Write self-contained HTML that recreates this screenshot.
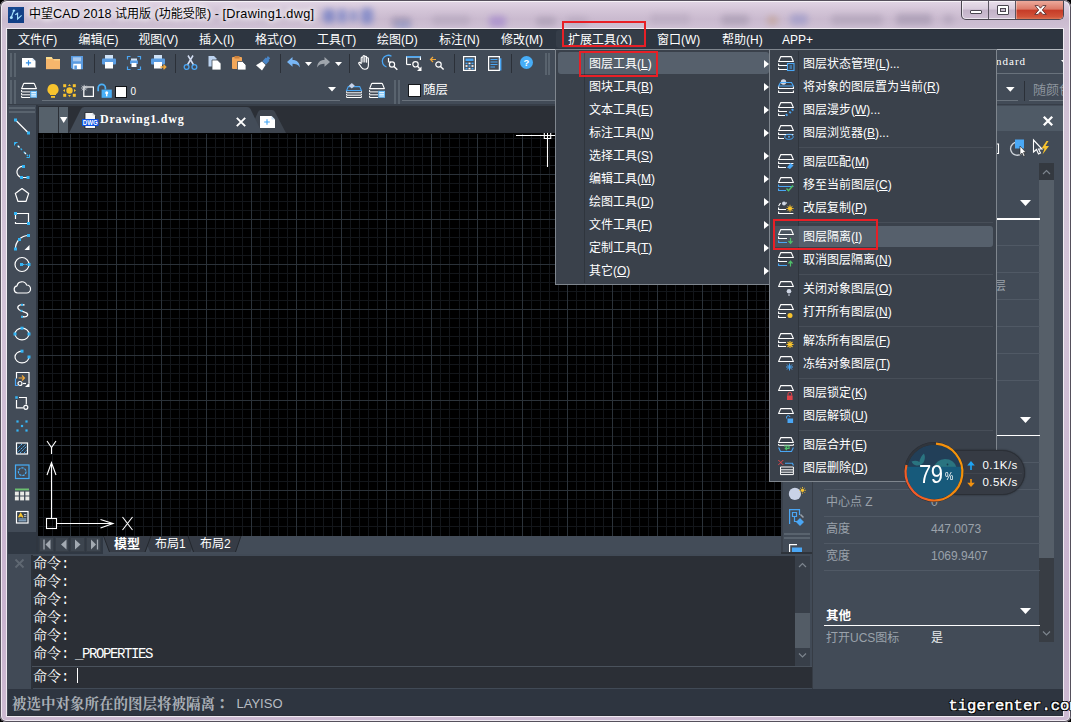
<!DOCTYPE html>
<html lang="zh-CN">
<head>
<meta charset="utf-8">
<title>中望CAD 2018 试用版 (功能受限) - [Drawing1.dwg]</title>
<style>
html,body{margin:0;padding:0;}
body{width:1071px;height:722px;overflow:hidden;position:relative;background:#000;
  font-family:"Liberation Sans","Noto Sans CJK SC",sans-serif;font-size:12px;color:#fff;line-height:1;}
div,span,svg{position:absolute;box-sizing:border-box;}
span{white-space:nowrap;}
svg{overflow:visible;}
#win{left:0;top:0;width:1071px;height:722px;border-radius:7px 7px 6px 6px;overflow:hidden;
  background:linear-gradient(180deg,#e2d7e6 0px,#d6c8da 8px,#cabacf 19px,#cdbed2 25px,#d0c2d5 29px,#cfc0d4 60px,#d3c4d8 300px,#cbb7d1 520px,#c9b4cf 620px,#cdbad2 722px);}
#winedge{left:0;top:0;width:1071px;height:722px;border-radius:7px 7px 6px 6px;
  box-shadow:inset 0 0 0 1px #55505c, inset 0 0 0 2px rgba(255,255,255,.7);}
.blob{filter:blur(3px);border-radius:4px;}
#title{left:29px;top:8px;font-size:12.7px;color:#000;letter-spacing:0;
  text-shadow:0 0 5px #fff,0 0 7px #fff,0 0 9px rgba(255,255,255,.9);}
#title i{font-style:normal;font-size:12px;}
#title b{font-weight:normal;letter-spacing:0.33px;}
.mb{top:34px;font-size:12px;color:#fff;}
.vsep{width:1px;background:#2b3038;}
.grip{width:2px;background:#59636e;}
.uline{height:1px;background:#69727c;}
.cl{left:33px;font-size:14px;color:#fff;font-family:"Liberation Mono","Noto Serif CJK SC",serif;}
.cl i{font-style:normal;font-size:14px;letter-spacing:-1.4px;}
.menu{background:#3a414b;border:1px solid #7f868e;}
.mi{font-size:12px;color:#fff;}
.mi u{text-decoration:underline;text-underline-offset:1px;}
.msep{height:1px;background:#474e58;}
.hl{background:#56606c;border-radius:3px;}
.redbox{border:2px solid #e81f26;}
.plabel{font-size:12px;color:#9aa2ab;}
.pline{height:1px;background:#505965;}
</style>
</head>
<body>
<div id="win">
<div class="blob" style="left:323px;top:9px;width:12px;height:14px;background:#6f7cc4;opacity:0.75;"></div>
<div class="blob" style="left:337px;top:9px;width:10px;height:14px;background:#7884c8;opacity:0.7;"></div>
<div class="blob" style="left:349px;top:10px;width:9px;height:12px;background:#7d88c8;opacity:0.65;"></div>
<div class="blob" style="left:361px;top:8px;width:12px;height:16px;background:#7480c6;opacity:0.75;"></div>
<div class="blob" style="left:391px;top:17px;width:20px;height:10px;background:#9c90ac;opacity:0.7;"></div>
<div class="blob" style="left:395px;top:22px;width:16px;height:6px;background:#8c9cd2;opacity:0.6;"></div>
<div class="blob" style="left:432px;top:16px;width:38px;height:9px;background:#b3a6bc;opacity:0.7;"></div>
<div class="blob" style="left:489px;top:16px;width:17px;height:11px;background:#a387cc;opacity:0.7;"></div>
<div class="blob" style="left:536px;top:17px;width:20px;height:9px;background:#a89bb2;opacity:0.7;"></div>
<div class="blob" style="left:566px;top:17px;width:22px;height:9px;background:#b1a4ba;opacity:0.6;"></div>
<div class="blob" style="left:650px;top:14px;width:40px;height:10px;background:#b4a6bc;opacity:0.55;"></div>
<div class="blob" style="left:721px;top:15px;width:28px;height:10px;background:#a79ab1;opacity:0.7;"></div>
<div class="blob" style="left:767px;top:16px;width:11px;height:9px;background:#c29f8c;opacity:0.6;"></div>
<div class="blob" style="left:790px;top:14px;width:18px;height:11px;background:#9896c8;opacity:0.65;"></div>
<div class="blob" style="left:831px;top:15px;width:52px;height:10px;background:#ada0b6;opacity:0.65;"></div>
<div class="blob" style="left:896px;top:14px;width:36px;height:11px;background:#a598b0;opacity:0.7;"></div>
<div class="blob" style="left:943px;top:15px;width:11px;height:9px;background:#aa9db4;opacity:0.6;"></div>
</div>
<div id="winedge"></div>
<svg style="left:8px;top:7px;" width="16" height="16" viewBox="0 0 16 16"><rect x="0" y="0" width="16" height="16" fill="#123f86"/><path d="M0 0 H16 L0 9 Z" fill="#1b4c96" opacity="0.6"/><path d="M3.3 10.3 L5.8 3.5" stroke="#a8e4ff" stroke-width="1.1"/><circle cx="3.3" cy="10.4" r="1.5" fill="#a8e4ff"/><circle cx="5.9" cy="3.6" r="1.2" fill="#a8e4ff"/><path d="M7.3 7.8 L9.6 6.3 L9.6 12 L13.6 8.4" fill="none" stroke="#a8e4ff" stroke-width="1.1"/></svg>
<span id="title"><i>中望</i>CAD 2018 <i>试用版</i> (<i>功能受限</i>) - <b>[Drawing1.dwg]</b></span>
<div style="left:960.8px;top:1px;width:103.2px;height:18.6px;border:1px solid #4a4650;border-top:none;border-radius:0 0 5px 5px;background:linear-gradient(180deg,#eae0ec 0%,#d8cbdc 45%,#c3b2c8 50%,#cfc0d4 100%);box-shadow:inset 0 0 0 1px rgba(255,255,255,.6);overflow:hidden;"><div style="left:26px;top:0px;width:1px;height:20px;background:#5a5560;"></div>
<div style="left:53px;top:0px;width:1px;height:20px;background:#5a5560;"></div>
<div style="left:54px;top:-1px;width:49px;height:20px;background:linear-gradient(180deg,#efb0a2 0%,#dc7a68 45%,#c63c28 52%,#d2543a 85%,#e08a68 100%);box-shadow:inset 0 0 0 1px rgba(255,255,255,.35);"></div>
</div>
<div style="left:970px;top:10px;width:12px;height:4px;background:#fff;border:1px solid #4a4650;border-radius:1px;"></div>
<div style="left:997px;top:5px;width:12px;height:10px;background:#fff;border:1px solid #4a4650;border-radius:1px;"><div style="left:2px;top:2px;width:6px;height:4px;background:#cbbdd0;border:1px solid #4a4650;"></div>
</div>
<svg style="left:1034px;top:5px;" width="13" height="10" viewBox="0 0 13 10"><path d="M1 0.6 L4.3 0.6 L6.5 3.2 L8.7 0.6 L12 0.6 L8.3 5 L12.2 9.4 L8.8 9.4 L6.5 6.8 L4.2 9.4 L0.8 9.4 L4.7 5 Z" fill="#fff" stroke="#5a3030" stroke-width="0.9"/></svg>
<div style="left:6.3px;top:27.5px;width:1057.7px;height:689px;border:1px solid rgba(255,255,255,.7);"></div>
<div style="left:7.3px;top:28.5px;width:1055.7px;height:687px;background:#2a2f38;"></div>
<div style="left:7.3px;top:30px;width:1055.7px;height:685px;background:#424b57;"></div>
<div style="left:7.5px;top:30px;width:1055.5px;height:19px;background:#2d3540;"></div>
<div style="left:555.5px;top:30px;width:89px;height:18px;background:#353d48;border-radius:3px;"></div>
<span class="mb" style="left:18px;top:34px;">文件(F)</span>
<span class="mb" style="left:78.5px;top:34px;">编辑(E)</span>
<span class="mb" style="left:138.3px;top:34px;">视图(V)</span>
<span class="mb" style="left:199px;top:34px;">插入(I)</span>
<span class="mb" style="left:255px;top:34px;">格式(O)</span>
<span class="mb" style="left:317px;top:34px;">工具(T)</span>
<span class="mb" style="left:377px;top:34px;">绘图(D)</span>
<span class="mb" style="left:439px;top:34px;">标注(N)</span>
<span class="mb" style="left:501px;top:34px;">修改(M)</span>
<span class="mb" style="left:568px;top:34px;">扩展工具(X)</span>
<span class="mb" style="left:657px;top:34px;">窗口(W)</span>
<span class="mb" style="left:722px;top:34px;">帮助(H)</span>
<span class="mb" style="left:782px;top:34px;">APP+</span>
<div style="left:7.5px;top:49px;width:1055.5px;height:1px;background:#b4b9bf;"></div>
<div class="grip" style="left:10px;top:52.5px;width:2px;height:24px;"></div>
<div class="grip" style="left:10px;top:79.5px;width:2px;height:24px;"></div>
<div class="grip" style="left:13.8px;top:52.5px;width:2px;height:24px;"></div>
<div class="grip" style="left:13.8px;top:79.5px;width:2px;height:24px;"></div>
<svg style="left:21.8px;top:57.7px;" width="13.5" height="9.5" viewBox="0 0 13.5 9.5"><path d="M0 0 H10.5 L13.5 3 V9.5 H0 Z" fill="#fff"/><path d="M10.5 0 V3 H13.5" fill="#cfe3f7"/><path d="M6.5 2.2 V7.4 M3.9 4.8 H9.1" stroke="#2f8de4" stroke-width="1.2"/></svg>
<svg style="left:46px;top:56.8px;" width="14" height="12.2" viewBox="0 0 14 12.2"><path d="M0 0 H5.8 L7 2 H0 Z" fill="#f9dc8e"/><path d="M0 2 H14 V12.2 H0 Z" fill="#f6b66c"/><path d="M0 2 H7.2 L8.2 3.4 H14 V2 Z" fill="#f9cf86"/></svg>
<svg style="left:71.1px;top:55.9px;" width="12" height="13.2" viewBox="0 0 12 13.2"><path d="M0 0 H12 V13.2 H1.5 L0 11.7 Z" fill="#5a9be0"/><rect x="2" y="1.3" width="8" height="4" fill="#a9c9ee"/><rect x="2.3" y="7.8" width="7.6" height="5.4" fill="#fff"/><rect x="3.3" y="9.5" width="2.6" height="3.7" fill="#5a9be0"/></svg>
<div class="vsep" style="left:94px;top:54px;width:1px;height:19px;"></div>
<svg style="left:102px;top:55px;" width="15" height="15" viewBox="0 0 15 15"><rect x="3" y="0" width="8" height="4" fill="#cfe2f6"/><rect x="0" y="3.5" width="14" height="6" rx="1" fill="#5b9de2"/><rect x="3" y="7" width="8" height="6.5" fill="#fff"/></svg>
<svg style="left:127px;top:56px;" width="14" height="14" viewBox="0 0 14 14"><path d="M0.5 3.5 V0.5 H3.5 M10.5 0.5 H13.5 V3.5 M13.5 10.5 V13.5 H10.5 M3.5 13.5 H0.5 V10.5" stroke="#4aa6f4" stroke-width="1.2" fill="none"/><rect x="4" y="2.5" width="6" height="2.5" fill="#cfe2f6"/><rect x="3" y="4.5" width="8" height="3.5" fill="#5b9de2"/><rect x="4.5" y="7" width="5" height="4" fill="#fff"/></svg>
<svg style="left:151px;top:55px;" width="15" height="15" viewBox="0 0 15 15"><rect x="3" y="0" width="8" height="4" fill="#cfe2f6"/><rect x="0" y="3.5" width="14" height="6" rx="1" fill="#5b9de2"/><rect x="3" y="7" width="8" height="6.5" fill="#fff"/><path d="M9.5 12 H14.5 M12.5 9.8 L14.8 12 L12.5 14.2" stroke="#f2a93b" stroke-width="1.3" fill="none"/></svg>
<div class="vsep" style="left:175px;top:54px;width:1px;height:19px;"></div>
<svg style="left:183px;top:55px;" width="15" height="15" viewBox="0 0 15 15"><path d="M5 0.5 L10.6 10 M10 0.5 L4.4 10" stroke="#d3def3" stroke-width="1.5" fill="none"/><circle cx="3.6" cy="12" r="2.4" stroke="#4aa6f4" stroke-width="1.3" fill="none"/><circle cx="11.4" cy="12" r="2.4" stroke="#4aa6f4" stroke-width="1.3" fill="none"/></svg>
<svg style="left:208px;top:56px;" width="13" height="14" viewBox="0 0 13 14"><path d="M0.5 0 H6 L8.5 2.5 V10.5 H0.5 Z" fill="#bcd3f0"/><path d="M4 4 H9.5 L13 7.5 V14 H4 Z" fill="#fff" stroke="#424b57" stroke-width="0.8"/></svg>
<svg style="left:232px;top:56px;" width="14" height="14" viewBox="0 0 14 14"><rect x="0" y="1" width="10" height="12" rx="1" fill="#f2a75a"/><rect x="2.5" y="0" width="5" height="2.5" fill="#c9803c"/><path d="M5.5 5.5 H10.5 L14 9 V14 H5.5 Z" fill="#fff" stroke="#424b57" stroke-width="0.8"/></svg>
<svg style="left:256px;top:56px;" width="15" height="15" viewBox="0 0 15 15"><path d="M11.8 0 L14.2 2.2 L12.6 4 L13.4 4.8 L10 8.6 L6.4 5.2 L9.8 1.6 L10.6 2.2 Z" fill="#4a86c8"/><path d="M6 5.6 L9.6 9 L6 14.5 L0 9.2 Z" fill="#fff"/></svg>
<div class="vsep" style="left:280px;top:54px;width:1px;height:19px;"></div>
<svg style="left:287px;top:57px;" width="13" height="11" viewBox="0 0 13 11"><path d="M5.5 0 V3 C10 3 12.8 5.5 12.8 10.5 C11 7.5 9 6.8 5.5 6.8 V9.8 L0 4.9 Z" fill="#78b6f5"/></svg>
<svg style="left:305px;top:62px;" width="7" height="4" viewBox="0 0 7 4"><path d="M0 0 H7 L3.5 4 Z" fill="#fff"/></svg>
<svg style="left:317px;top:57px;" width="13" height="11" viewBox="0 0 13 11"><path d="M7.5 0 V3 C3 3 0.2 5.5 0.2 10.5 C2 7.5 4 6.8 7.5 6.8 V9.8 L13 4.9 Z" fill="#9fa5ac"/></svg>
<svg style="left:335px;top:62px;" width="7" height="4" viewBox="0 0 7 4"><path d="M0 0 H7 L3.5 4 Z" fill="#fff"/></svg>
<div class="vsep" style="left:349px;top:54px;width:1px;height:19px;"></div>
<svg style="left:358px;top:55px;" width="13" height="15" viewBox="0 0 13 15"><path d="M3.2 8.5 V3 Q3.2 2 4.1 2 Q5 2 5 3 V7 V1.6 Q5 0.6 5.9 0.6 Q6.8 0.6 6.8 1.6 V7 V2.2 Q6.8 1.3 7.7 1.3 Q8.6 1.3 8.6 2.2 V7.3 V3.6 Q8.6 2.8 9.5 2.8 Q10.4 2.8 10.4 3.6 V10 Q10.4 14.3 6.8 14.3 Q4.5 14.3 3.3 12.3 L0.8 8.6 Q0.4 7.7 1.2 7.4 Q2 7.2 2.6 8 Z" fill="none" stroke="#fff" stroke-width="1.1" stroke-linejoin="round"/></svg>
<svg style="left:382px;top:55px;" width="16" height="15" viewBox="0 0 16 15"><path d="M9.5 1.2 A6 6 0 1 0 4.5 12" stroke="#4aa6f4" stroke-width="1.3" fill="none"/><path d="M6.5 3 V7 H9" stroke="#fff" stroke-width="1.2" fill="none"/><circle cx="10" cy="9.5" r="2.6" stroke="#fff" stroke-width="1.2" fill="none"/><path d="M12 11.5 L15.3 14.8" stroke="#fff" stroke-width="1.4"/></svg>
<svg style="left:405.5px;top:56px;" width="16" height="15" viewBox="0 0 16 15"><path d="M0.6 8.5 V0.8 H14.4 V4" stroke="#fff" stroke-width="1.2" fill="none"/><path d="M0.6 0.8 H14.4" stroke="#4aa6f4" stroke-width="1.6"/><path d="M0.6 8.5 H5" stroke="#fff" stroke-width="1.2"/><circle cx="9.5" cy="8.3" r="2.7" stroke="#fff" stroke-width="1.2" fill="none"/><path d="M11.5 10.3 L13.6 12.4" stroke="#fff" stroke-width="1.4"/><path d="M15.5 10.5 V15 H11 Z" fill="#fff"/></svg>
<svg style="left:429.5px;top:56px;" width="14" height="14" viewBox="0 0 14 14"><path d="M0.5 3.5 H6 M3 1 L0.5 3.5 L3 6" stroke="#f2a93b" stroke-width="1.2" fill="none"/><circle cx="8.5" cy="8.5" r="2.7" stroke="#fff" stroke-width="1.2" fill="none"/><path d="M10.5 10.5 L13.6 13.6" stroke="#fff" stroke-width="1.4"/></svg>
<div class="vsep" style="left:454px;top:54px;width:1px;height:19px;"></div>
<svg style="left:463px;top:55.7px;" width="13" height="15" viewBox="0 0 13 15"><rect x="0.6" y="0.6" width="11.8" height="13.8" fill="none" stroke="#fff" stroke-width="1.2"/><rect x="2.5" y="2.5" width="8" height="2.5" fill="#4aa6f4"/><rect x="2.5" y="6.6" width="2" height="1.6" fill="#4aa6f4"/><rect x="5.5" y="6.6" width="2" height="1.6" fill="#fff"/><rect x="8.5" y="6.6" width="2" height="1.6" fill="#4aa6f4"/><rect x="2.5" y="9.2" width="2" height="1.6" fill="#fff"/><rect x="5.5" y="9.2" width="2" height="1.6" fill="#4aa6f4"/><rect x="8.5" y="9.2" width="2" height="1.6" fill="#fff"/><rect x="2.5" y="11.8" width="2" height="1.6" fill="#4aa6f4"/><rect x="5.5" y="11.8" width="2" height="1.6" fill="#fff"/><rect x="8.5" y="11.8" width="2" height="1.6" fill="#4aa6f4"/></svg>
<svg style="left:488px;top:55.7px;" width="13" height="15" viewBox="0 0 13 15"><path d="M0.6 0.6 H11.4 V14.4 H0.6 Z" fill="none" stroke="#fff" stroke-width="1.2"/><path d="M11.5 3 H12.6 V14.4" stroke="#4aa6f4" stroke-width="1.6" fill="none"/><path d="M2.5 3.5 H9.5 M2.5 6 H9.5 M2.5 8.5 H9.5 M2.5 11 H7" stroke="#4aa6f4" stroke-width="1.1"/></svg>
<div class="vsep" style="left:511px;top:54px;width:1px;height:19px;"></div>
<svg style="left:520px;top:56px;" width="13" height="13" viewBox="0 0 13 13"><circle cx="6.5" cy="6.5" r="6.5" fill="#47adf7"/><text x="6.5" y="10" font-size="9.5" font-weight="bold" text-anchor="middle" fill="#fff" font-family="Liberation Sans, sans-serif">?</text></svg>
<div class="grip" style="left:545px;top:53px;width:2px;height:22px;"></div>
<div class="grip" style="left:548px;top:53px;width:2px;height:22px;"></div>
<svg style="left:21.2px;top:83px;" width="16" height="15" viewBox="0 0 16 15"><path d="M0.6 5.6 L2.6 0.8 Q2.8 0.4 3.4 0.4 H12.6 Q13.2 0.4 13.4 0.8 L15.4 5.6 Z" fill="none" stroke="#fff" stroke-width="1.1" stroke-linejoin="round"/><path d="M0.6 7 V8.9 H9 M0.6 10 V11.8 H9 M0.6 12.8 V14.5 H9" stroke="#fff" stroke-width="1" fill="none"/><rect x="9.2" y="7.8" width="6.8" height="7" fill="#6bbcf8"/><path d="M10.3 9.6 H15 M10.3 11.3 H15 M10.3 13 H15" stroke="#fff" stroke-width="0.9"/></svg>
<svg style="left:46.5px;top:84.2px;" width="12" height="14" viewBox="0 0 12 14"><path d="M6 0 A5.6 5.6 0 0 1 9 10.3 V11 H3 V10.3 A5.6 5.6 0 0 1 6 0 Z" fill="#f7c32e"/><rect x="4" y="12" width="4" height="1.8" fill="#f7c32e"/></svg>
<svg style="left:63.1px;top:84px;" width="13" height="13" viewBox="0 0 13 13"><circle cx="6.5" cy="6.5" r="3.2" fill="#f7c32e"/><rect x="0.2" y="0.2" width="3" height="3" fill="#f7c32e"/><rect x="9.8" y="0.2" width="3" height="3" fill="#f7c32e"/><rect x="0.2" y="9.8" width="3" height="3" fill="#f7c32e"/><rect x="9.8" y="9.8" width="3" height="3" fill="#f7c32e"/><path d="M6.5 0 L8 2 H5 Z M6.5 13 L8 11 H5 Z M0 6.5 L2 5 V8 Z M13 6.5 L11 5 V8 Z" fill="#f7c32e"/></svg>
<svg style="left:80.5px;top:83.5px;" width="13" height="13" viewBox="0 0 13 13"><rect x="2.8" y="3" width="9.6" height="9.4" fill="none" stroke="#fff" stroke-width="1.2"/><path d="M0 4 H6.4 M3.2 0.8 V7.2 M0.9 1.7 L5.5 6.3 M5.5 1.7 L0.9 6.3" stroke="#c8cdd3" stroke-width="0.9"/></svg>
<svg style="left:96.5px;top:83px;" width="15" height="15" viewBox="0 0 15 15"><path d="M1.2 8.3 V5 A3.6 3.6 0 0 1 8.4 5 V6.5" stroke="#4ab0f8" stroke-width="1.7" fill="none"/><rect x="4.6" y="6.6" width="10.2" height="8.2" fill="#4ab0f8"/><circle cx="9.7" cy="9.8" r="1.5" fill="#fff"/><rect x="9" y="10.3" width="1.4" height="3" fill="#fff"/></svg>
<div style="left:115px;top:86px;width:12px;height:11.8px;background:#fff;border:1px solid #111418;"></div>
<span style="left:130.5px;top:86.5px;font-size:10px;color:#fff;">0</span>
<div class="uline" style="left:42px;top:100px;width:298px;height:1px;"></div>
<svg style="left:328px;top:87px;" width="8" height="4.5" viewBox="0 0 8 4.5"><path d="M0 0 H8 L4 4.5 Z" fill="#fff"/></svg>
<svg style="left:345.5px;top:83px;" width="16" height="15" viewBox="0 0 16 15"><path d="M0.6 7.5 L2.3 3.6 H13.7 L15.4 7.5 Z" fill="none" stroke="#4aa6f4" stroke-width="1.1"/><path d="M5.8 0 L8.8 2.8 L5.8 5.6 L2.8 2.8 Z" fill="#c7d3ea"/><path d="M0.6 8.3 V9.8 H15.4 V8.3 M0.6 10.8 V12.2 H15.4 V10.8 M0.6 13.1 V14.5 H15.4 V13.1" stroke="#fff" stroke-width="1" fill="none"/></svg>
<svg style="left:369px;top:83px;" width="16" height="15" viewBox="0 0 16 15"><path d="M0.6 5.6 L2.6 0.8 Q2.8 0.4 3.4 0.4 H12.6 Q13.2 0.4 13.4 0.8 L15.4 5.6 Z" fill="none" stroke="#fff" stroke-width="1.1" stroke-linejoin="round"/><path d="M0.6 7 V8.9 H9 M0.6 10 V11.8 H9 M0.6 12.8 V14.5 H9" stroke="#fff" stroke-width="1" fill="none"/><rect x="9.2" y="7.8" width="6.8" height="7" fill="#6bbcf8"/><path d="M10.3 9.6 H15 M10.3 11.3 H15 M10.3 13 H15" stroke="#fff" stroke-width="0.9"/></svg>
<div class="grip" style="left:394.3px;top:79.5px;width:1.8px;height:24px;"></div>
<div class="grip" style="left:398px;top:79.5px;width:1.8px;height:24px;"></div>
<div style="left:408px;top:84px;width:12.5px;height:12.5px;background:#fff;border:1px solid #14171b;"></div>
<span style="left:423px;top:84px;font-size:12.5px;color:#fff;">随层</span>
<div class="uline" style="left:402px;top:100px;width:616px;height:1px;"></div>
<div style="left:990px;top:50px;width:73px;height:55px;overflow:hidden;"><span style="left:6px;top:6px;font-size:11px;color:#fff;font-family:'Liberation Serif',serif;letter-spacing:1px;">ndard</span>
<svg style="left:70.5px;top:10px;" width="7" height="4" viewBox="0 0 7 4"><path d="M0 0 H7 L3.5 4 Z" fill="#fff"/></svg>
<div class="uline" style="left:6px;top:23px;width:67px;height:1px;"></div>
<svg style="left:15.7px;top:36.6px;" width="8.6" height="4.8" viewBox="0 0 8.6 4.8"><path d="M0 0 H8.6 L4.3 4.8 Z" fill="#fff"/></svg>
<div class="vsep" style="left:34px;top:31px;width:1px;height:20px;"></div>
<span style="left:43px;top:32.5px;font-size:13px;color:#8d959e;">随颜色</span>
<div class="uline" style="left:39px;top:50px;width:40px;height:1px;"></div>
</div>
<div style="left:7.5px;top:104px;width:1055.5px;height:2px;background:#373e48;"></div>
<div style="left:38px;top:105.5px;width:743px;height:27.5px;background:#2b2f36;"></div>
<div style="left:39px;top:107px;width:18.5px;height:26px;background:#56616b;"></div>
<div style="left:58.5px;top:107px;width:9.5px;height:26px;background:#56616b;"></div>
<svg style="left:59.8px;top:117px;" width="7.4" height="6" viewBox="0 0 7.4 6"><path d="M0 0 H7.4 L3.7 6 Z" fill="#fff"/></svg>
<svg style="left:0px;top:0px;" width="300" height="140" viewBox="0 0 300 140"><path d="M249 133 L258 112 Q259 110 261 110 H272 Q274 110 275 112 L286 133 Z" fill="#3d444e"/><path d="M69 133 L81 109 Q82 107 84.5 107 H247 Q249.5 107 250.5 109 L262 133 Z" fill="#434c58"/></svg>
<svg style="left:82px;top:112px;" width="17" height="17" viewBox="0 0 17 17"><path d="M3 0.5 H10.5 L13.5 3.5 V16.5 H3 Z" fill="#f4f6f8" stroke="#1c2026" stroke-width="0.8"/><path d="M10.5 0.5 V3.5 H13.5" fill="#c9d0d8"/><rect x="0" y="7" width="16.5" height="7" fill="#0b52e6"/><text x="8.3" y="13" font-size="7" font-weight="bold" text-anchor="middle" fill="#fff" font-family="Liberation Sans, sans-serif" textLength="15" lengthAdjust="spacingAndGlyphs">DWG</text></svg>
<span style="left:100px;top:113px;font-family:'Liberation Serif','Noto Serif CJK SC',serif;font-weight:bold;font-size:12px;letter-spacing:0.8px;color:#fff;">Drawing1.dwg</span>
<svg style="left:236px;top:117px;" width="10" height="10" viewBox="0 0 10 10"><path d="M0.8 0.8 L9.2 9.2 M9.2 0.8 L0.8 9.2" stroke="#fff" stroke-width="1.9"/></svg>
<svg style="left:260px;top:116px;" width="15" height="12" viewBox="0 0 15 12"><path d="M0 0 H11.5 L15 3.5 V12 H0 Z" fill="#fff"/><path d="M11.5 0 V3.5 H15" fill="#cfe3f7"/><path d="M7 3.2 V8.8 M4.2 6 H9.8" stroke="#3fa4f4" stroke-width="1.1"/></svg>
<div style="left:7.5px;top:105px;width:28.5px;height:427px;background:#424b57;"></div>
<div style="left:7.5px;top:532px;width:30.5px;height:22px;background:#303843;"></div>
<div style="left:36px;top:105px;width:2px;height:449px;background:#2f3640;"></div>
<div style="left:9px;top:107px;width:26px;height:2px;background:#59636e;"></div>
<div style="left:9px;top:111px;width:26px;height:2px;background:#59636e;"></div>
<svg style="left:10px;top:114.5px;" width="24" height="23" viewBox="0 0 24 23"><path d="M5.5 5 L18.5 18" stroke="#fff" stroke-width="1.2" fill="none"/><rect x="4" y="3.5" width="3" height="3" fill="#35b5f5"/><rect x="17" y="16.5" width="3" height="3" fill="#35b5f5"/></svg>
<svg style="left:10px;top:137.5px;" width="24" height="23" viewBox="0 0 24 23"><path d="M4.5 4.5 L19.5 19.5" stroke="#35b5f5" stroke-width="1.3" stroke-dasharray="2 2.3" fill="none"/><path d="M4.5 7.5 V4.5 H7.5 M16.5 19.5 H19.5 V16.5" stroke="#35b5f5" stroke-width="1" fill="none"/><path d="M8 8 L9.5 9.5 M14.5 14.5 L16 16" stroke="#fff" stroke-width="1.2"/></svg>
<svg style="left:10px;top:160.5px;" width="24" height="23" viewBox="0 0 24 23"><path d="M13.5 5.5 A5.5 5.5 0 1 0 11.5 16.5 H18" stroke="#fff" stroke-width="1.2" fill="none"/><rect x="12" y="4" width="3" height="3" fill="#35b5f5"/><rect x="10" y="15" width="3" height="3" fill="#35b5f5"/><rect x="16.5" y="15" width="3" height="3" fill="#35b5f5"/></svg>
<svg style="left:10px;top:183.5px;" width="24" height="23" viewBox="0 0 24 23"><path d="M12 4.5 L18.7 9.4 L16.1 17.3 H7.9 L5.3 9.4 Z" stroke="#fff" stroke-width="1.2" fill="none" stroke-linejoin="round"/></svg>
<svg style="left:10px;top:206.5px;" width="24" height="23" viewBox="0 0 24 23"><path d="M5.5 6.5 H18.5 V16.5 H5.5 Z" stroke="#fff" stroke-width="1.2" fill="none"/><rect x="3.5" y="12" width="4" height="3" fill="#424b57"/><rect x="4" y="5" width="3" height="3" fill="#35b5f5"/><rect x="17" y="15" width="3" height="3" fill="#35b5f5"/></svg>
<svg style="left:10px;top:229.5px;" width="24" height="23" viewBox="0 0 24 23"><path d="M5.5 19 A13 13 0 0 1 18.5 5.5" stroke="#fff" stroke-width="1.2" fill="none"/><rect x="4" y="17.5" width="3" height="3" fill="#35b5f5"/><rect x="8" y="8" width="3" height="3" fill="#35b5f5"/><rect x="17" y="4" width="3" height="3" fill="#35b5f5"/><path d="M19.5 15 V20 H14.5 Z" fill="#fff"/></svg>
<svg style="left:10px;top:252.5px;" width="24" height="23" viewBox="0 0 24 23"><circle cx="12" cy="11.5" r="7" stroke="#fff" stroke-width="1.2" fill="none"/><rect x="10" y="10" width="3" height="3" fill="#35b5f5"/><rect x="17.5" y="10" width="3" height="3" fill="#35b5f5"/><path d="M13 11.5 H17.5" stroke="#35b5f5" stroke-width="1" stroke-dasharray="1.5 1"/></svg>
<svg style="left:10px;top:275.5px;" width="24" height="23" viewBox="0 0 24 23"><path d="M7.5 17 A3.6 3.6 0 0 1 7 9.9 A5 5 0 0 1 16.6 9 A4 4 0 0 1 16.5 17 Z" stroke="#fff" stroke-width="1.2" fill="none" stroke-linejoin="round"/></svg>
<svg style="left:10px;top:298.5px;" width="24" height="23" viewBox="0 0 24 23"><path d="M14.5 6 C9 4.5 5.5 8.5 9.5 11 C13 13 19 13.5 17.5 16.5 C16.5 18.5 13.5 18 11.5 17.5" stroke="#fff"  fill="none" stroke-width="1.3"/><rect x="11" y="4.8" width="2" height="2" fill="#35b5f5"/><rect x="10.5" y="10.8" width="2" height="2" fill="#35b5f5"/><rect x="11" y="16.8" width="2" height="2" fill="#35b5f5"/></svg>
<svg style="left:10px;top:321.5px;" width="24" height="23" viewBox="0 0 24 23"><ellipse cx="12" cy="12" rx="7" ry="5.8" stroke="#fff" stroke-width="1.2" fill="none"/><rect x="10.5" y="4.7" width="3" height="3" fill="#35b5f5"/><rect x="3.5" y="10.5" width="3" height="3" fill="#35b5f5"/><rect x="17.5" y="10.5" width="3" height="3" fill="#35b5f5"/></svg>
<svg style="left:10px;top:344.5px;" width="24" height="23" viewBox="0 0 24 23"><path d="M12 6.2 A7 5.8 0 1 0 19 12" stroke="#fff" stroke-width="1.2" fill="none"/><rect x="10.5" y="4.7" width="3" height="3" fill="#35b5f5"/><rect x="17.5" y="10.5" width="3" height="3" fill="#35b5f5"/></svg>
<svg style="left:10px;top:367.5px;" width="24" height="23" viewBox="0 0 24 23"><path d="M6.5 10.5 V4.5 H19 V15" stroke="#fff" stroke-width="1.2" fill="none"/><path d="M5.5 10.5 V17.5 H8" stroke="#4aa6f4" stroke-width="1.2" fill="none"/><path d="M8.5 10 H14.5 M12 7.5 L14.5 10 L12 12.5" stroke="#f2a93b" stroke-width="1.1" fill="none"/><circle cx="10" cy="15.5" r="2" stroke="#fff" stroke-width="1.2" fill="none"/><path d="M13 15.5 H16" stroke="#fff" stroke-width="1.2"/><path d="M19.5 14.5 V19 H15 Z" fill="#fff"/></svg>
<svg style="left:10px;top:390.5px;" width="24" height="23" viewBox="0 0 24 23"><path d="M9 6.5 H16.3 V13.5 M6.5 9 V16.8 H13.3" stroke="#fff" stroke-width="1.2" fill="none"/><rect x="5.25" y="5.25" width="2.5" height="2.5" fill="#35b5f5"/><circle cx="15.8" cy="16.3" r="2" stroke="#fff" stroke-width="1.2" fill="none"/></svg>
<svg style="left:10px;top:413.5px;" width="24" height="23" viewBox="0 0 24 23"><rect x="6.4" y="6.4" width="2.2" height="2.2" fill="#35b5f5"/><rect x="15.4" y="6.4" width="2.2" height="2.2" fill="#35b5f5"/><rect x="10.9" y="10.9" width="2.2" height="2.2" fill="#35b5f5"/><rect x="6.4" y="15.4" width="2.2" height="2.2" fill="#35b5f5"/><rect x="15.4" y="15.4" width="2.2" height="2.2" fill="#35b5f5"/></svg>
<svg style="left:10px;top:436.5px;" width="24" height="23" viewBox="0 0 24 23"><rect x="6.5" y="6" width="11" height="11" fill="#2b3a4a" stroke="#fff" stroke-width="1.2"/><path d="M7.5 11.5 L12 7 M7.5 15.5 L16 7 M10 16 L16.5 9.5 M14 16 L16.5 13.5" stroke="#5ab4f5" stroke-width="1" stroke-dasharray="1.6 0.8"/></svg>
<svg style="left:10px;top:459.5px;" width="24" height="23" viewBox="0 0 24 23"><rect x="5.5" y="5" width="13.5" height="13.5" fill="none" stroke="#47adf7" stroke-width="1.2"/><circle cx="12.2" cy="11.7" r="3.8" fill="none" stroke="#47adf7" stroke-width="1.2" stroke-dasharray="2.4 0.9"/></svg>
<svg style="left:10px;top:482.5px;" width="24" height="23" viewBox="0 0 24 23"><rect x="5" y="5.5" width="14" height="1.9" fill="#6cc070"/><rect x="4.9" y="8.6" width="3.9" height="3.9" fill="#e9e9e6"/><rect x="10.15" y="8.6" width="3.9" height="3.9" fill="#e9e9e6"/><rect x="15.4" y="8.6" width="3.9" height="3.9" fill="#e9e9e6"/><rect x="4.9" y="13.5" width="3.9" height="3.9" fill="#e9e9e6"/><rect x="10.15" y="13.5" width="3.9" height="3.9" fill="#e9e9e6"/><rect x="15.4" y="13.5" width="3.9" height="3.9" fill="#e9e9e6"/></svg>
<svg style="left:10px;top:505.5px;" width="24" height="23" viewBox="0 0 24 23"><rect x="6.5" y="5.5" width="11.5" height="11.5" fill="#38424e" stroke="#fff" stroke-width="1.2"/><path d="M8.6 11.3 L10.7 7.6 L12.8 11.3 M9.4 10 H12" stroke="#f7c32e" stroke-width="1.4" fill="none"/><path d="M14 8.5 H16.3 M14 10.3 H16.3" stroke="#e4e8ec" stroke-width="0.8"/><path d="M8.5 13 H16.3 M8.5 14.8 H16.3" stroke="#a8d4f8" stroke-width="0.9"/></svg>
<svg style="left:38px;top:133px;overflow:hidden;" width="743" height="403" viewBox="0 0 743 403"><rect width="743" height="403" fill="#000"/><g shape-rendering="crispEdges" fill="none" stroke-width="1" transform="translate(0.5,0.5)"><path d="M5 0V403M14 0V403M23 0V403M41 0V403M50 0V403M59 0V403M69 0V403M87 0V403M96 0V403M105 0V403M114 0V403M132 0V403M141 0V403M150 0V403M159 0V403M177 0V403M186 0V403M195 0V403M204 0V403M222 0V403M231 0V403M240 0V403M249 0V403M267 0V403M276 0V403M285 0V403M294 0V403M312 0V403M321 0V403M330 0V403M339 0V403M357 0V403M366 0V403M375 0V403M384 0V403M402 0V403M411 0V403M421 0V403M430 0V403M448 0V403M457 0V403M466 0V403M475 0V403M493 0V403M502 0V403M511 0V403M520 0V403M538 0V403M547 0V403M556 0V403M565 0V403M583 0V403M592 0V403M601 0V403M610 0V403M628 0V403M637 0V403M646 0V403M655 0V403M673 0V403M682 0V403M691 0V403M700 0V403M718 0V403M727 0V403M736 0V403M0 5H743M0 14H743M0 23H743M0 32H743M0 50H743M0 59H743M0 68H743M0 77H743M0 95H743M0 104H743M0 113H743M0 122H743M0 140H743M0 149H743M0 158H743M0 167H743M0 185H743M0 194H743M0 203H743M0 212H743M0 231H743M0 240H743M0 249H743M0 258H743M0 276H743M0 285H743M0 294H743M0 303H743M0 321H743M0 330H743M0 339H743M0 348H743M0 366H743M0 375H743M0 384H743M0 393H743" stroke="#13161a"/><path d="M32 0V403M78 0V403M123 0V403M168 0V403M213 0V403M258 0V403M303 0V403M348 0V403M393 0V403M439 0V403M484 0V403M529 0V403M574 0V403M619 0V403M664 0V403M709 0V403M0 41H743M0 86H743M0 131H743M0 176H743M0 222H743M0 267H743M0 312H743M0 357H743" stroke="#2b3239"/></g></svg>
<svg style="left:0px;top:0px;" width="200" height="560" viewBox="0 0 200 560"><g stroke="#fff" stroke-width="1.1" fill="none"><rect x="46.5" y="518.5" width="10" height="10"/><path d="M51.5 518 V462.5 M47 475 L51.5 462.5 L56 475"/><path d="M57 523.5 H113 M100.5 519.5 L113 523.5 L100.5 528"/><path d="M47 441 L51.5 447.5 L56 441 M51.5 447.5 V454"/><path d="M122.5 517 L132.5 530 M132.5 517 L122.5 530"/></g></svg>
<svg style="left:0px;top:0px;" width="600" height="200" viewBox="0 0 600 200"><g stroke="#fff" stroke-width="1.1" fill="none"><path d="M516 135.5 H555.5 M547.5 133 V167"/><path d="M544.3 133 V138.5 H550.7 V133"/></g></svg>
<div style="left:38px;top:536px;width:743px;height:19px;background:#434c58;"></div>
<div style="left:38px;top:536px;width:64.5px;height:18.5px;background:#303843;"></div>
<div style="left:39px;top:537px;width:14.7px;height:14.5px;background:#3d454f;border:1px solid #353c45;"></div>
<div style="left:54.7px;top:537px;width:14.7px;height:14.5px;background:#3d454f;border:1px solid #353c45;"></div>
<div style="left:70.4px;top:537px;width:14.7px;height:14.5px;background:#3d454f;border:1px solid #353c45;"></div>
<div style="left:86.1px;top:537px;width:14.7px;height:14.5px;background:#3d454f;border:1px solid #353c45;"></div>
<svg style="left:0px;top:0px;" width="300" height="560" viewBox="0 0 300 560"><path d="M44 539.5 V549.5" stroke="#a3aab2" stroke-width="1.3"/><path d="M50.5 539.5 V549.5 L45.5 544.5 Z" fill="#a3aab2"/><path d="M66.5 539.5 V549.5 L61 544.5 Z" fill="#a3aab2"/><path d="M75 539.5 V549.5 L80.5 544.5 Z" fill="#a3aab2"/><path d="M91 539.5 V549.5 L96 544.5 Z" fill="#a3aab2"/><path d="M97.5 539.5 V549.5" stroke="#a3aab2" stroke-width="1.3"/><path d="M103.5 536 L109.5 552 H235.5 L241 536 Z" fill="#363c46"/><path d="M145.5 552 L147.7 546 L150 552 Z M190.5 552 L192 548 L193.3 552 Z" fill="#434c58"/><path d="M103.5 536 L109.5 552 M151 536 L145 552 M188 536 L193.5 552 M241 536 L235.5 552" stroke="#23272d" stroke-width="1" fill="none"/></svg>
<span style="left:114px;top:537px;font-weight:bold;font-size:13px;color:#fff;">模型</span>
<span style="left:155px;top:537.5px;font-size:12px;color:#fff;">布局1</span>
<span style="left:200px;top:537.5px;font-size:12px;color:#fff;">布局2</span>
<div style="left:781px;top:105px;width:31px;height:447px;background:#424b57;"></div>
<div style="left:781px;top:105px;width:2px;height:447px;background:#3a414b;"></div>
<div style="left:781px;top:552px;width:31px;height:3px;background:#2e333a;"></div>
<svg style="left:787px;top:484px;" width="18" height="18" viewBox="0 0 18 18"><circle cx="7.9" cy="9.9" r="6.1" fill="#c9d2e6"/><circle cx="15.5" cy="6.3" r="1.7" fill="#f7c32e"/><path d="M15.5 3 V4 M15.5 8.6 V9.6 M12.2 6.3 H13.2 M17.8 6.3 H18.8 M13.2 4 L13.9 4.7 M17.1 7.9 L17.8 8.6 M17.8 4 L17.1 4.7 M13.9 7.9 L13.2 8.6" stroke="#f7c32e" stroke-width="0.9"/></svg>
<svg style="left:789px;top:509px;" width="16" height="17" viewBox="0 0 16 17"><path d="M0.6 15 V0.6 H10.5 V6 M3.5 3.5 H7.5 V7.5 H3.5 Z M5.5 7.5 V12.5 H8" fill="none" stroke="#4aa6f4" stroke-width="1.2"/><path d="M11 9 L15 13 L11 17 L7 13 Z" fill="#4aa6f4"/><path d="M11.5 5.5 L14.5 8.5" stroke="#9aa2ab" stroke-width="1.5"/></svg>
<div style="left:784px;top:533px;width:26px;height:2px;background:#59636e;"></div>
<div style="left:784px;top:537px;width:26px;height:2px;background:#59636e;"></div>
<svg style="left:789px;top:544px;overflow:hidden;" width="14" height="8" viewBox="0 0 14 8"><path d="M0.6 10 V0.6 H8" fill="none" stroke="#fff" stroke-width="1.2"/><rect x="3" y="3.5" width="10" height="7" fill="#4aa6f4"/></svg>
<div style="left:7.5px;top:554px;width:804.5px;height:135px;background:#414a56;"></div>
<div style="left:32px;top:556px;width:763px;height:110px;background:#2b2f36;"></div>
<div style="left:32px;top:667px;width:780px;height:21px;background:#2b2f36;"></div>
<div style="left:31px;top:555px;width:1.5px;height:134px;background:#2c3139;"></div>
<div style="left:32px;top:666px;width:780px;height:1px;background:#4a525c;"></div>
<svg style="left:15px;top:559px;" width="9" height="9" viewBox="0 0 9 9"><path d="M0.5 0.5 L8.5 8.5 M8.5 0.5 L0.5 8.5" stroke="#5f6872" stroke-width="1.9"/></svg>
<span class="cl" style="left:33px;top:557px;">命令<i>:</i></span>
<span class="cl" style="left:33px;top:575px;">命令<i>:</i></span>
<span class="cl" style="left:33px;top:593px;">命令<i>:</i></span>
<span class="cl" style="left:33px;top:611px;">命令<i>:</i></span>
<span class="cl" style="left:33px;top:629px;">命令<i>:</i></span>
<span class="cl" style="left:33px;top:647px;">命令<i>: _PROPERTIES</i></span>
<span class="cl" style="left:33px;top:670px;">命令<i>:</i></span>
<div style="left:77px;top:668px;width:1px;height:15px;background:#fff;"></div>
<div style="left:795px;top:556px;width:15px;height:110px;background:#383f49;"></div>
<div style="left:795px;top:613px;width:15px;height:35px;background:#535c66;"></div>
<svg style="left:798px;top:562px;" width="9" height="7" viewBox="0 0 9 7"><path d="M1 5 L4.5 1.5 L8 5" fill="none" stroke="#7d858e" stroke-width="1.2"/></svg>
<svg style="left:798px;top:652px;" width="9" height="7" viewBox="0 0 9 7"><path d="M1 1.5 L4.5 5 L8 1.5" fill="none" stroke="#7d858e" stroke-width="1.2"/></svg>
<div style="left:812px;top:105px;width:251px;height:584px;background:#424b57;"></div>
<div style="left:812px;top:105px;width:1px;height:584px;background:#363c45;"></div>
<div style="left:813px;top:106px;width:250px;height:25px;background:#4f5a66;"></div>
<svg style="left:1043px;top:116px;" width="10" height="10" viewBox="0 0 10 10"><path d="M0.8 0.8 L9.2 9.2 M9.2 0.8 L0.8 9.2" stroke="#fff" stroke-width="2.3"/></svg>
<svg style="left:992px;top:142px;" width="8" height="12" viewBox="0 0 8 12"><path d="M0 11.5 H6.5 V2 H3" fill="none" stroke="#fff" stroke-width="1.1"/></svg>
<svg style="left:1009px;top:139px;" width="18" height="18" viewBox="0 0 18 18"><path d="M10 3.5 A6.5 6.5 0 1 0 12.5 14.5" fill="none" stroke="#cfd5db" stroke-width="1.3"/><rect x="6" y="0.5" width="9" height="9" fill="#4aa8f5"/><path d="M11 7 V16 L13 14 L14.5 17.5 L16 16.8 L14.5 13.5 H17 Z" fill="#fff" stroke="#222" stroke-width="0.6"/></svg>
<svg style="left:1032px;top:139px;" width="20" height="18" viewBox="0 0 20 18"><path d="M1.5 1 V13 L4.5 10.5 L6.5 15 L8.5 14 L6.5 10 H10 Z" fill="none" stroke="#fff" stroke-width="1.1"/><path d="M14.5 2 L9.5 9.5 H12.5 L10.5 15.5 L17 7 H13.5 L16.5 2 Z" fill="#f7c32e"/></svg>
<div style="left:1039px;top:163px;width:15px;height:479px;background:#383d44;"></div>
<div style="left:1039px;top:163px;width:15px;height:17px;background:#343940;"></div>
<div style="left:1039px;top:180px;width:15px;height:378px;background:#565f69;"></div>
<svg style="left:1042px;top:169px;" width="9" height="7" viewBox="0 0 9 7"><path d="M1 5 L4.5 1.5 L8 5" fill="none" stroke="#7d858e" stroke-width="1.2"/></svg>
<svg style="left:1042px;top:630px;" width="9" height="7" viewBox="0 0 9 7"><path d="M1 1.5 L4.5 5 L8 1.5" fill="none" stroke="#7d858e" stroke-width="1.2"/></svg>
<svg style="left:1020px;top:200px;" width="11" height="6" viewBox="0 0 11 6"><path d="M0 0 H11 L5.5 6 Z" fill="#fff"/></svg>
<div style="left:996px;top:218px;width:44px;height:1.5px;background:#fff;"></div>
<svg style="left:1020px;top:417px;" width="11" height="6" viewBox="0 0 11 6"><path d="M0 0 H11 L5.5 6 Z" fill="#fff"/></svg>
<div style="left:996px;top:435px;width:44px;height:1.2px;background:#fff;"></div>
<div class="pline" style="left:996px;top:245px;width:44px;height:1px;"></div>
<div class="pline" style="left:996px;top:272px;width:44px;height:1px;"></div>
<div class="pline" style="left:996px;top:299px;width:44px;height:1px;"></div>
<div class="pline" style="left:996px;top:326px;width:44px;height:1px;"></div>
<div class="pline" style="left:996px;top:353px;width:44px;height:1px;"></div>
<div class="pline" style="left:996px;top:380px;width:44px;height:1px;"></div>
<div class="pline" style="left:996px;top:462px;width:44px;height:1px;"></div>
<span class="plabel" style="left:994px;top:280px;">层</span>
<div class="pline" style="left:824px;top:489px;width:216px;height:1px;"></div>
<div class="pline" style="left:824px;top:516px;width:216px;height:1px;"></div>
<div class="pline" style="left:824px;top:543px;width:216px;height:1px;"></div>
<div class="pline" style="left:824px;top:570px;width:216px;height:1px;"></div>
<span class="plabel" style="left:826px;top:496px;">中心点 Z</span>
<span class="plabel" style="left:931px;top:496px;">0</span>
<span class="plabel" style="left:826px;top:523px;">高度</span>
<span class="plabel" style="left:931px;top:523px;">447.0073</span>
<span class="plabel" style="left:826px;top:550px;">宽度</span>
<span class="plabel" style="left:931px;top:550px;">1069.9407</span>
<span style="left:826px;top:610px;font-weight:bold;font-size:12.5px;color:#fff;">其他</span>
<svg style="left:1020px;top:607.5px;" width="11" height="6" viewBox="0 0 11 6"><path d="M0 0 H11 L5.5 6 Z" fill="#fff"/></svg>
<div style="left:824px;top:624.5px;width:216px;height:1.2px;background:#fff;"></div>
<span class="plabel" style="left:826px;top:632px;">打开UCS图标</span>
<span style="left:931px;top:632px;font-size:12px;color:#e8ebee;">是</span>
<div style="left:7.5px;top:689px;width:1055.5px;height:26px;background:#2e3540;"></div>
<span style="left:12px;top:695.5px;font-family:'Liberation Serif','Noto Serif CJK SC',serif;font-weight:bold;font-size:14.5px;color:#a9afb6;">被选中对象所在的图层将被隔离<b lang="ja" style="font-family:'Noto Serif CJK JP',serif">：</b></span>
<span style="left:236.5px;top:697px;font-size:13px;color:#b8bdc3;">LAYISO</span>
<span style="left:948.5px;top:699px;font-family:'Liberation Mono',monospace;font-weight:normal;-webkit-text-stroke:0.45px #fff;font-size:15.5px;letter-spacing:0px;color:#fff;text-shadow:-1px 0 #000,1px 0 #000,0 -1px #000,0 1px #000,1px 1px #000,-1px -1px #000,1px -1px #000,-1px 1px #000;">tigerenter.com</span>
<div class="menu" style="left:555px;top:49px;width:215px;height:236px;"></div>
<div style="left:584px;top:52px;width:1px;height:231px;background:#2f353d;"></div>
<div class="hl" style="left:558px;top:52px;width:211px;height:22px;"></div>
<div style="left:584px;top:52px;width:1px;height:22px;background:#454d58;"></div>
<span class="mi" style="left:589px;top:58px;">图层工具(<u>L</u>)</span>
<svg style="left:764px;top:59.5px;" width="5" height="8" viewBox="0 0 5 8"><path d="M0 0 L5 4 L0 8 Z" fill="#fff"/></svg>
<span class="mi" style="left:589px;top:81px;">图块工具(<u>B</u>)</span>
<svg style="left:764px;top:82.5px;" width="5" height="8" viewBox="0 0 5 8"><path d="M0 0 L5 4 L0 8 Z" fill="#fff"/></svg>
<span class="mi" style="left:589px;top:104px;">文本工具(<u>E</u>)</span>
<svg style="left:764px;top:105.5px;" width="5" height="8" viewBox="0 0 5 8"><path d="M0 0 L5 4 L0 8 Z" fill="#fff"/></svg>
<span class="mi" style="left:589px;top:127px;">标注工具(<u>N</u>)</span>
<svg style="left:764px;top:128.5px;" width="5" height="8" viewBox="0 0 5 8"><path d="M0 0 L5 4 L0 8 Z" fill="#fff"/></svg>
<span class="mi" style="left:589px;top:150px;">选择工具(<u>S</u>)</span>
<svg style="left:764px;top:151.5px;" width="5" height="8" viewBox="0 0 5 8"><path d="M0 0 L5 4 L0 8 Z" fill="#fff"/></svg>
<span class="mi" style="left:589px;top:173px;">编辑工具(<u>M</u>)</span>
<svg style="left:764px;top:174.5px;" width="5" height="8" viewBox="0 0 5 8"><path d="M0 0 L5 4 L0 8 Z" fill="#fff"/></svg>
<span class="mi" style="left:589px;top:196px;">绘图工具(<u>D</u>)</span>
<svg style="left:764px;top:197.5px;" width="5" height="8" viewBox="0 0 5 8"><path d="M0 0 L5 4 L0 8 Z" fill="#fff"/></svg>
<span class="mi" style="left:589px;top:219px;">文件工具(<u>F</u>)</span>
<svg style="left:764px;top:220.5px;" width="5" height="8" viewBox="0 0 5 8"><path d="M0 0 L5 4 L0 8 Z" fill="#fff"/></svg>
<span class="mi" style="left:589px;top:242px;">定制工具(<u>T</u>)</span>
<svg style="left:764px;top:243.5px;" width="5" height="8" viewBox="0 0 5 8"><path d="M0 0 L5 4 L0 8 Z" fill="#fff"/></svg>
<span class="mi" style="left:589px;top:265px;">其它(<u>O</u>)</span>
<svg style="left:764px;top:266.5px;" width="5" height="8" viewBox="0 0 5 8"><path d="M0 0 L5 4 L0 8 Z" fill="#fff"/></svg>
<div class="menu" style="left:769.4px;top:49px;width:227.2px;height:433px;"></div>
<div style="left:798px;top:51px;width:1px;height:429px;background:#2f353d;"></div>
<div class="hl" style="left:774px;top:226px;width:219px;height:21px;"></div>
<div style="left:774px;top:226px;width:24.5px;height:21px;background:#4a535e;border-radius:3px 0 0 3px;"></div>
<span class="mi" style="left:803px;top:58px;">图层状态管理(<u>L</u>)...</span>
<svg style="left:778px;top:56px;" width="16" height="15" viewBox="0 0 16 15"><path d="M0.6 5.5 L2.8 0.6 H13.2 L15.4 5.5 Z" fill="none" stroke="#fff" stroke-width="1.1" stroke-linejoin="round"/><path d="M0.6 7.5 V9.5 H9" fill="none" stroke="#fff" stroke-width="1.1"/><path d="M0.6 11.5 V13.5 H9" fill="none" stroke="#fff" stroke-width="1.1"/><rect x="9.5" y="7.5" width="6.5" height="7" fill="none" stroke="#4aa6f4" stroke-width="1.1"/><path d="M11.5 10 H14 M11.5 12 H14" stroke="#4aa6f4" stroke-width="1"/></svg>
<span class="mi" style="left:803px;top:81px;">将对象的图层置为当前(<u>R</u>)</span>
<svg style="left:778px;top:79px;" width="16" height="15" viewBox="0 0 16 15"><circle cx="5.5" cy="3" r="2.7" fill="#cfd6e4"/><path d="M0.6 7 L2.5 3.5 H13.5 L15.4 7 Z" fill="none" stroke="#4aa6f4" stroke-width="1.1"/><path d="M0.6 7.5 V9.5 H15.4 V7.5" fill="none" stroke="#fff" stroke-width="1.1"/><path d="M0.6 11.5 V13.5 H15.4 V11.5" fill="none" stroke="#fff" stroke-width="1.1"/></svg>
<span class="mi" style="left:803px;top:104px;">图层漫步(<u>W</u>)...</span>
<svg style="left:778px;top:102px;" width="16" height="15" viewBox="0 0 16 15"><path d="M0.6 5.5 L2.8 0.6 H13.2 L15.4 5.5 Z" fill="none" stroke="#fff" stroke-width="1.1" stroke-linejoin="round"/><path d="M0.6 7.5 V9.5 H9" fill="none" stroke="#fff" stroke-width="1.1"/><path d="M0.6 11.5 V13.5 H7" fill="none" stroke="#fff" stroke-width="1.1"/><path d="M8 13.5 L10 11.5 M11.5 11 L13 9.5 M14 8.5 L15.5 6.5" stroke="#4aa6f4" stroke-width="2.2" stroke-dasharray="1.8 1.2"/></svg>
<span class="mi" style="left:803px;top:127px;">图层浏览器(<u>B</u>)...</span>
<svg style="left:778px;top:125px;" width="16" height="15" viewBox="0 0 16 15"><path d="M0.6 5.5 L2.8 0.6 H13.2 L15.4 5.5 Z" fill="none" stroke="#fff" stroke-width="1.1" stroke-linejoin="round"/><path d="M0.6 7.5 V9.5 H15.4" fill="none" stroke="#fff" stroke-width="1.1"/><path d="M0.6 11.5 V13.5 H6" fill="none" stroke="#fff" stroke-width="1.1"/><ellipse cx="11" cy="11.8" rx="4.2" ry="2.5" fill="none" stroke="#4aa6f4" stroke-width="1"/><circle cx="11" cy="11.8" r="1" fill="#4aa6f4"/></svg>
<span class="mi" style="left:803px;top:156px;">图层匹配(<u>M</u>)</span>
<svg style="left:778px;top:154px;" width="16" height="15" viewBox="0 0 16 15"><path d="M0.6 5.5 L2.8 0.6 H13.2 L15.4 5.5 Z" fill="none" stroke="#fff" stroke-width="1.1" stroke-linejoin="round"/><path d="M0.6 7.5 V9.5 H15.4" fill="none" stroke="#fff" stroke-width="1.1"/><path d="M0.6 11.5 V13.5 H8" fill="none" stroke="#fff" stroke-width="1.1"/><path d="M9 13.5 L12.5 9 L15.5 11.5 L12 15 Z" fill="#4aa6f4"/></svg>
<span class="mi" style="left:803px;top:179px;">移至当前图层(<u>C</u>)</span>
<svg style="left:778px;top:177px;" width="16" height="15" viewBox="0 0 16 15"><path d="M0.6 5.5 L2.8 0.6 H13.2 L15.4 5.5 Z" fill="none" stroke="#fff" stroke-width="1.1" stroke-linejoin="round"/><path d="M0.6 7.5 V9.5 H15.4" fill="none" stroke="#4aa6f4" stroke-width="1.1"/><path d="M0.6 11.5 V13.5 H8" fill="none" stroke="#4aa6f4" stroke-width="1.1"/><path d="M8.5 11.5 L10.5 13.8 L15 8.5" fill="none" stroke="#4fc16a" stroke-width="1.4"/></svg>
<span class="mi" style="left:803px;top:202px;">改层复制(<u>P</u>)</span>
<svg style="left:778px;top:200px;" width="16" height="15" viewBox="0 0 16 15"><circle cx="6" cy="3.5" r="2" fill="#cfd6e4"/><path d="M0.6 7.5 V9.5 H8" fill="none" stroke="#fff" stroke-width="1.1"/><path d="M0.6 11.5 V13.5 H15.4" fill="none" stroke="#fff" stroke-width="1.1"/><circle cx="12" cy="8.5" r="2" fill="#f7c32e"/><path d="M12 4.8 V12.2 M8.3 8.5 H15.7 M9.4 5.9 L14.6 11.1 M14.6 5.9 L9.4 11.1" stroke="#f7c32e" stroke-width="0.8"/><path d="M0.6 6 L2.5 3 M9 3 H8" stroke="#fff" stroke-width="1.1"/></svg>
<span class="mi" style="left:803px;top:231px;">图层隔离(<u>I</u>)</span>
<svg style="left:778px;top:229px;" width="16" height="15" viewBox="0 0 16 15"><path d="M0.6 5.5 L2.8 0.6 H13.2 L15.4 5.5 Z" fill="none" stroke="#fff" stroke-width="1.1" stroke-linejoin="round"/><path d="M0.6 7.5 V9.5 H9" fill="none" stroke="#fff" stroke-width="1.1"/><path d="M0.6 11.5 V13.5 H9" fill="none" stroke="#4aa6f4" stroke-width="1.1"/><path d="M12.5 9 V14 M10.5 12 L12.5 14.3 L14.5 12" fill="none" stroke="#4fc16a" stroke-width="1.2"/></svg>
<span class="mi" style="left:803px;top:254px;">取消图层隔离(<u>N</u>)</span>
<svg style="left:778px;top:252px;" width="16" height="15" viewBox="0 0 16 15"><path d="M0.6 5.5 L2.8 0.6 H13.2 L15.4 5.5 Z" fill="none" stroke="#fff" stroke-width="1.1" stroke-linejoin="round"/><path d="M0.6 7.5 V9.5 H9" fill="none" stroke="#fff" stroke-width="1.1"/><path d="M0.6 11.5 V13.5 H9" fill="none" stroke="#4aa6f4" stroke-width="1.1"/><path d="M12.5 14.5 V9.5 M10.5 11.5 L12.5 9.2 L14.5 11.5" fill="none" stroke="#4fc16a" stroke-width="1.2"/></svg>
<span class="mi" style="left:803px;top:283px;">关闭对象图层(<u>O</u>)</span>
<svg style="left:778px;top:281px;" width="16" height="15" viewBox="0 0 16 15"><path d="M0.6 5.5 L2.8 0.6 H13.2 L15.4 5.5 Z" fill="none" stroke="#fff" stroke-width="1.1" stroke-linejoin="round"/><circle cx="11" cy="10.3" r="2.3" fill="#cfd6e4"/><path d="M10 14 H12" stroke="#cfd6e4" stroke-width="1"/></svg>
<span class="mi" style="left:803px;top:306px;">打开所有图层(<u>N</u>)</span>
<svg style="left:778px;top:304px;" width="16" height="15" viewBox="0 0 16 15"><path d="M0.6 5.5 L2.8 0.6 H13.2 L15.4 5.5 Z" fill="none" stroke="#fff" stroke-width="1.1" stroke-linejoin="round"/><path d="M0.6 7.5 V9.5 H8" fill="none" stroke="#fff" stroke-width="1.1"/><path d="M0.6 11.5 V13.5 H8" fill="none" stroke="#fff" stroke-width="1.1"/><circle cx="12" cy="11.5" r="2.5" fill="#f7c32e"/></svg>
<span class="mi" style="left:803px;top:335px;">解冻所有图层(<u>F</u>)</span>
<svg style="left:778px;top:333px;" width="16" height="15" viewBox="0 0 16 15"><path d="M0.6 5.5 L2.8 0.6 H13.2 L15.4 5.5 Z" fill="none" stroke="#fff" stroke-width="1.1" stroke-linejoin="round"/><path d="M0.6 7.5 V9.5 H8" fill="none" stroke="#fff" stroke-width="1.1"/><path d="M0.6 11.5 V13.5 H8" fill="none" stroke="#fff" stroke-width="1.1"/><path d="M12 8 V15 M8.5 11.5 H15.5 M9.5 9 L14.5 14 M14.5 9 L9.5 14" stroke="#f7c32e" stroke-width="1.1"/></svg>
<span class="mi" style="left:803px;top:358px;">冻结对象图层(<u>T</u>)</span>
<svg style="left:778px;top:356px;" width="16" height="15" viewBox="0 0 16 15"><path d="M0.6 5.5 L2.8 0.6 H13.2 L15.4 5.5 Z" fill="none" stroke="#fff" stroke-width="1.1" stroke-linejoin="round"/><path d="M11.5 7.5 V14.5 M8 11 H15 M9 8.5 L14 13.5 M14 8.5 L9 13.5" stroke="#4aa6f4" stroke-width="1"/></svg>
<span class="mi" style="left:803px;top:387px;">图层锁定(<u>K</u>)</span>
<svg style="left:778px;top:385px;" width="16" height="15" viewBox="0 0 16 15"><path d="M0.6 5.5 L2.8 0.6 H13.2 L15.4 5.5 Z" fill="none" stroke="#fff" stroke-width="1.1" stroke-linejoin="round"/><path d="M10 10.5 V9 A1.8 1.8 0 0 1 13.6 9 V10.5" fill="none" stroke="#e0434a" stroke-width="1"/><rect x="9" y="10.5" width="5.6" height="4.5" fill="#e0434a"/></svg>
<span class="mi" style="left:803px;top:410px;">图层解锁(<u>U</u>)</span>
<svg style="left:778px;top:408px;" width="16" height="15" viewBox="0 0 16 15"><path d="M0.6 5.5 L2.8 0.6 H13.2 L15.4 5.5 Z" fill="none" stroke="#fff" stroke-width="1.1" stroke-linejoin="round"/><path d="M8.5 10.5 V9 A1.8 1.8 0 0 1 12 9" fill="none" stroke="#4aa6f4" stroke-width="1"/><rect x="9.5" y="10.5" width="5.6" height="4.5" fill="#4aa6f4"/></svg>
<span class="mi" style="left:803px;top:439px;">图层合并(<u>E</u>)</span>
<svg style="left:778px;top:437px;" width="16" height="15" viewBox="0 0 16 15"><path d="M0.6 5.5 L2.8 0.6 H13.2 L15.4 5.5 Z" fill="none" stroke="#fff" stroke-width="1.1" stroke-linejoin="round"/><path d="M0.6 7 V8.3 H15.4 V7" fill="none" stroke="#fff" stroke-width="1"/><path d="M6 9 H11 V11.5 H7.5 M9 9.8 L7.3 11.5 L9 13.2" fill="none" stroke="#4fc16a" stroke-width="1.2"/><path d="M0.6 10.5 L2.5 14.5 H13.5 L15.4 10.5" fill="none" stroke="#4aa6f4" stroke-width="1.1"/></svg>
<span class="mi" style="left:803px;top:462px;">图层删除(<u>D</u>)</span>
<svg style="left:778px;top:460px;" width="16" height="15" viewBox="0 0 16 15"><path d="M0.3 0 L5.3 5 M5.3 0 L0.3 5" stroke="#e0434a" stroke-width="1"/><path d="M7 3.2 H14.5 L15.4 5.5" fill="none" stroke="#4aa6f4" stroke-width="1.1"/><path d="M2.5 7 H15.4 V9.8 H2.5 Z M2.5 9.8 V12.2 H15.4 V9.8 M2.5 12.2 V14.6 H15.4 V12.2" fill="none" stroke="#fff" stroke-width="1"/></svg>
<div class="msep" style="left:799px;top:146.5px;width:194px;height:1px;"></div>
<div class="msep" style="left:799px;top:221.5px;width:194px;height:1px;"></div>
<div class="msep" style="left:799px;top:273.5px;width:194px;height:1px;"></div>
<div class="msep" style="left:799px;top:325.5px;width:194px;height:1px;"></div>
<div class="msep" style="left:799px;top:377.5px;width:194px;height:1px;"></div>
<div class="msep" style="left:799px;top:429.5px;width:194px;height:1px;"></div>
<div class="redbox" style="left:562px;top:21px;width:84px;height:26px;"></div>
<div class="redbox" style="left:579px;top:51px;width:79px;height:26px;"></div>
<div class="redbox" style="left:773px;top:219px;width:105px;height:31px;"></div>
<div style="left:936px;top:450px;width:89px;height:45px;background:#363b44;border-radius:22.5px;border:1px solid #2b2f36;box-shadow:0 0 2px rgba(0,0,0,.5);"></div>
<div style="left:964px;top:473px;width:58px;height:1px;background:#40454e;"></div>
<svg style="left:966px;top:460.5px;" width="10" height="9" viewBox="0 0 10 9"><path d="M5 9 V2.5" stroke="#1ea5f5" stroke-width="1.6"/><path d="M1.2 4.5 L5 0 L8.8 4.5 Z" fill="#1ea5f5"/></svg>
<svg style="left:966px;top:478.5px;" width="10" height="8" viewBox="0 0 10 8"><path d="M5 0 V5.5" stroke="#f39210" stroke-width="1.6"/><path d="M1.2 3.7 L5 8 L8.8 3.7 Z" fill="#f39210"/></svg>
<span style="left:982.5px;top:459.5px;font-size:11.5px;color:#fff;letter-spacing:0.45px;">0.1K/s</span>
<span style="left:982.5px;top:477px;font-size:11.5px;color:#fff;letter-spacing:0.45px;">0.5K/s</span>
<svg style="left:903px;top:440.6px;" width="62" height="62" viewBox="0 0 62 62"><defs><clipPath id="wc"><circle cx="31" cy="31" r="27.3"/></clipPath></defs><circle cx="31" cy="31" r="30" fill="#2a2e35"/><g clip-path="url(#wc)"><rect x="0" y="0" width="62" height="62" fill="#223f58"/><path d="M8.5 20.5 Q13 19 16.5 21 Q17 16 21 12.5 Q23 17 20.5 21.5 Q18 25 13.5 24.5 Q10 24 8.5 20.5 Z" fill="#2a7480"/><path d="M31 26.5 Q33 18.5 42 18 Q51 18 53.5 26.5 Z" fill="#2a7480"/><circle cx="44.5" cy="23.5" r="0.9" fill="#1b3a4c"/><rect x="0" y="25.8" width="62" height="40" fill="#175a7b"/></g><circle cx="31" cy="31" r="28.4" fill="none" stroke="#30353c" stroke-width="2.2"/><defs><linearGradient id="wg" x1="1" y1="0" x2="0" y2="0.6"><stop offset="0" stop-color="#f59a08"/><stop offset="0.650" stop-color="#f2820f"/><stop offset="1" stop-color="#f05a2a"/></linearGradient></defs><path d="M33 2.7 A28.4 28.4 0 1 1 3.49 23.94" fill="none" stroke="url(#wg)" stroke-width="2.2"/></svg>
<span style="left:919px;top:460.5px;font-size:26px;color:#fff;letter-spacing:-0.5px;transform:scaleX(0.85);transform-origin:left center;">79</span>
<span style="left:945px;top:471px;font-size:11px;color:#fff;transform:scaleX(0.85);transform-origin:left center;">%</span>
</body>
</html>
